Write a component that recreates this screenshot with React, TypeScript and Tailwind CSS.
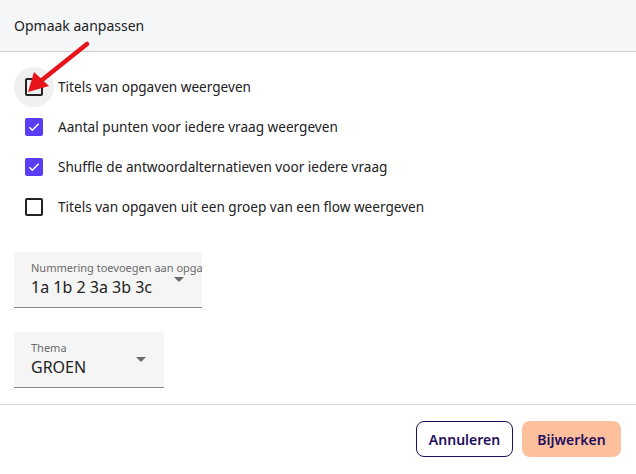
import React from "react";

const options = [
  { label: "Titels van opgaven weergeven", checked: false, hover: true },
  { label: "Aantal punten voor iedere vraag weergeven", checked: true },
  { label: "Shuffle de antwoordalternatieven voor iedere vraag", checked: true },
  { label: "Titels van opgaven uit een groep van een flow weergeven", checked: false },
];

function Checkbox({ checked, hover }: { checked: boolean; hover?: boolean }) {
  return (
    <div className="relative flex h-[40px] w-[40px] items-center justify-center rounded-full">
      {hover && <div className="absolute inset-0 rounded-full bg-[#f0f0f0]" />}
      {checked ? (
        <div className="relative flex h-[18px] w-[18px] items-center justify-center rounded-[2px] bg-[#5b3cf5]">
          <svg width="14" height="14" viewBox="0 0 24 24" fill="none">
            <path d="M4 12.5l5 5L20 6.5" stroke="white" strokeWidth="2.6" />
          </svg>
        </div>
      ) : (
        <div className="relative h-[18px] w-[18px] rounded-[2px] border-2 border-[#222]" />
      )}
    </div>
  );
}

function Select({ label, value, width }: { label: string; value: string; width: string }) {
  return (
    <div className={`${width} relative h-[56px] overflow-hidden rounded-t bg-[#f5f5f5] border-b border-[#8a8a8a]`}>
      <div className="absolute left-[17px] top-[8px] whitespace-nowrap text-[11px] text-[#6b6b6b]">{label}</div>
      <div className="absolute left-[17px] top-[23px] text-[16px] text-[#222]">{value}</div>
      <div className="absolute right-[18px] top-[25px] h-0 w-0 border-x-[5px] border-t-[5px] border-x-transparent border-t-[#6b6b6b]" />
    </div>
  );
}

export default function App() {
  return (
    <div
      className="relative h-[474px] w-[636px] bg-white text-[#222]"
      style={{ fontFamily: '"Noto Sans", sans-serif' }}
    >
      <div className="flex h-[52px] items-center border-b border-[#cfcfd3] bg-[#f5f6f8] px-[14px] text-[14px]">
        Opmaak aanpassen
      </div>

      <div className="flex flex-col pt-[15px] pl-[14px]">
        {options.map((o) => (
          <div key={o.label} className="flex h-[40px] items-center">
            <Checkbox checked={o.checked} hover={o.hover} />
            <span className="ml-[4px] text-[13.6px]">{o.label}</span>
          </div>
        ))}
      </div>

      <div className="mt-[25px] flex flex-col gap-[24px] pl-[14px]">
        <Select label="Nummering toevoegen aan opgaven" value="1a 1b 2 3a 3b 3c" width="w-[188px]" />
        <Select label="Thema" value="GROEN" width="w-[150px]" />
      </div>

      <div className="absolute left-0 right-0 top-[404px] border-t border-[#d6d6d9]" />
      <div className="absolute right-[15px] top-[421px] flex gap-[9px]">
        <button className="h-[36px] w-[97px] rounded-lg border border-[#1f0e5c] text-[14px] font-semibold text-[#1f0e5c]">
          Annuleren
        </button>
        <button className="h-[36px] w-[99px] rounded-lg bg-[#fdc09d] text-[14px] font-semibold text-[#1f0e5c]">
          Bijwerken
        </button>
      </div>

      <svg className="pointer-events-none absolute left-0 top-0" width="636" height="474">
        <line x1="87" y1="44" x2="42" y2="80" stroke="#e8141c" strokeWidth="4.5" strokeLinecap="round" />
        <polygon points="28,92 34,72 49,86" fill="#e8141c" />
      </svg>
    </div>
  );
}
